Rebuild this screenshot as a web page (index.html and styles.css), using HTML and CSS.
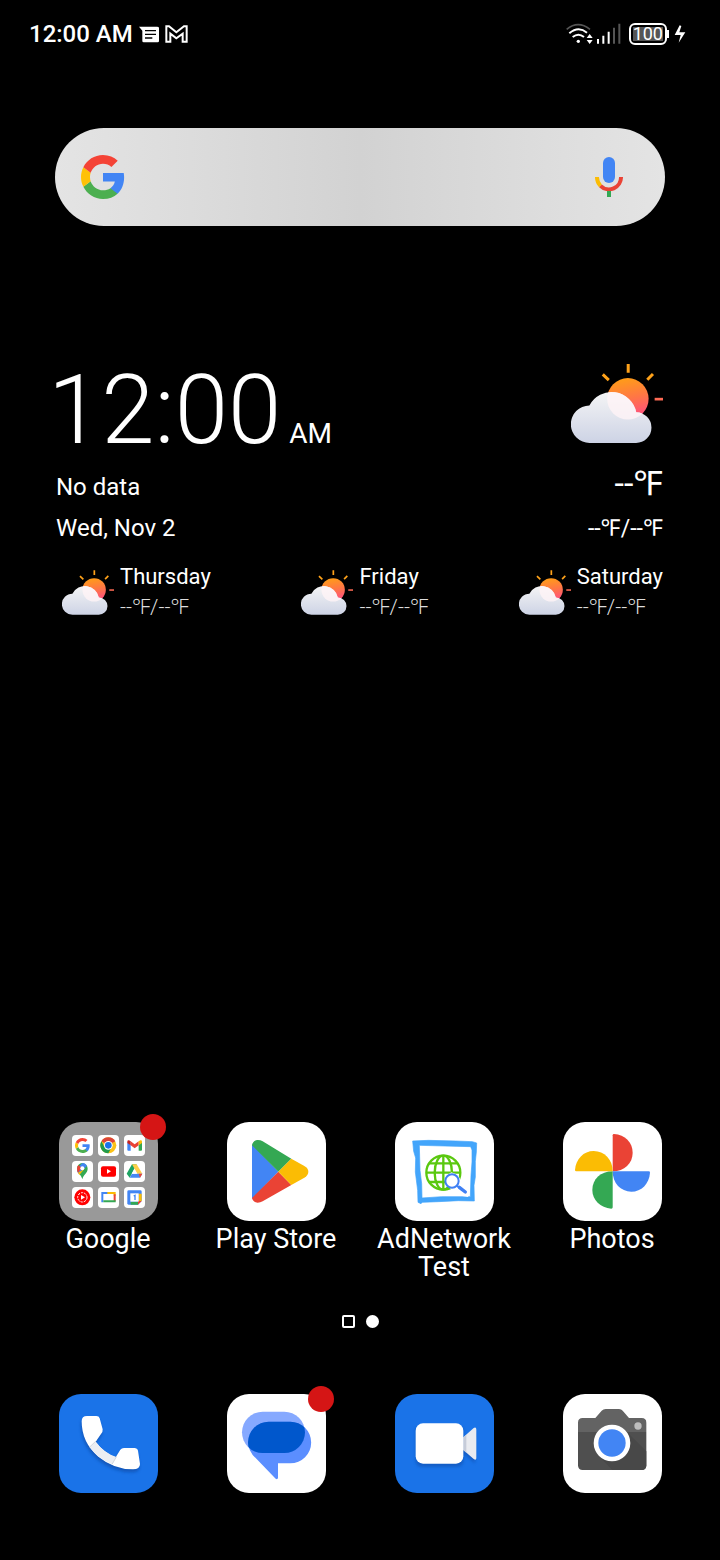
FILE: index.html
```html
<!DOCTYPE html>
<html lang="en">
    <head>
        <meta charset="utf-8">
        <meta name="viewport" content="width=device-width, initial-scale=1">
        <title>Home</title>
        <link rel="stylesheet" href="styles.css">
    </head>
    <body>
        <!-- shared shapes -->
        <svg class="defs" width="0" height="0" aria-hidden="true">
            <defs>
                <linearGradient id="sun" x1="0.4" y1="0" x2="0.6" y2="1">
                    <stop offset="0" stop-color="#ff9d17"/>
                    <stop offset="0.5" stop-color="#ff7547"/>
                    <stop offset="1" stop-color="#ff4b86"/>
                </linearGradient>
                <linearGradient id="cloud" x1="0" y1="0" x2="0" y2="1">
                    <stop offset="0" stop-color="#f4f4f5"/>
                    <stop offset="1" stop-color="#cdd3e5"/>
                </linearGradient>
                <clipPath id="cloud-clip">
                    <path d="M56 236A56 56 0 0 1 55 124A75 75 0 0 1 195 144A46 46 0 0 1 194 236Z"/>
                </clipPath>
                <clipPath id="bubble-clip"><rect x="45" y="53" width="189" height="124" rx="62"/></clipPath>
                <filter id="soft" x="-20%" y="-20%" width="140%" height="150%"><feGaussianBlur stdDeviation="5"/></filter>
            </defs>
            <symbol id="weather" viewBox="0 0 275 236">
                <circle cx="170" cy="104" r="62" fill="url(#sun)"/>
                <path d="M171 0V26M95 31L113 48M245 30L228 47" stroke="#ffa21a" stroke-width="9" fill="none"/>
                <path d="M250 105H275" stroke="#ff6b55" stroke-width="8"/>
                <path d="M56 236A56 56 0 0 1 55 124A75 75 0 0 1 195 144A46 46 0 0 1 194 236Z" fill="url(#cloud)"/>
                <circle cx="170" cy="104" r="62" fill="#fff4f6" opacity="0.8" clip-path="url(#cloud-clip)"/>
            </symbol>
            <symbol id="google-g" viewBox="1 1 22 22">
                <path fill="#4285f4" d="M22.56 12.25c0-.78-.07-1.53-.2-2.25H12v4.26h5.92c-.26 1.37-1.04 2.53-2.21 3.31v2.77h3.57c2.08-1.92 3.28-4.74 3.28-8.09z"/>
                <path fill="#4caf50" d="M12 23c2.97 0 5.46-.98 7.28-2.66l-3.57-2.77c-.98.66-2.23 1.06-3.71 1.06-2.86 0-5.29-1.93-6.16-4.53l-3.66 2.83C3.99 20.53 7.7 23 12 23z"/>
                <path fill="#ffc107" d="M5.84 14.09c-.22-.66-.35-1.36-.35-2.09s.13-1.43.35-2.09L2.18 7.07C1.43 8.55 1 10.22 1 12s.43 3.45 1.18 4.93l3.66-2.84z"/>
                <path fill="#f44336" d="M12 5.38c1.62 0 3.06.56 4.21 1.64l3.15-3.15C17.45 2.09 14.97 1 12 1 7.7 1 3.99 3.47 2.18 7.07l3.66 2.84c.87-2.6 3.3-4.53 6.16-4.53z"/>
            </symbol>
        </svg>

        <header class="status">
            <div class="status-left">
                <span class="status-time">12:00 AM</span>
                <svg width="20" height="17" viewBox="0 0 60 51">
                    <path d="M0 2H54Q60 2 60 6V45Q60 49 56 49H14Q10 49 10 45V14Z" fill="#fff"/>
                    <path d="M18 14H51M18 25H51M18 36H40" stroke="#000" stroke-width="4"/>
                </svg>
                <svg width="23" height="18" viewBox="0 0 69 54">
                    <path d="M4 50V4H12L34 22L57 4H65V50H53V26L34 40L16 26V50Z" fill="none" stroke="#fff" stroke-width="6"/>
                </svg>
            </div>
            <div class="status-right">
                <svg width="27" height="22" viewBox="0 0 81 66" fill="none">
                    <path d="M2 19Q36 -9 72 19" stroke="#555" stroke-width="5"/>
                    <path d="M10 31Q37 8 63 29M20 42Q37 28 54 42" stroke="#fff" stroke-width="6"/>
                    <circle cx="37" cy="55" r="5" fill="#fff"/>
                    <path d="M62 45L71 33L80 45ZM62 51L71 63L80 51Z" fill="#fff"/>
                </svg>
                <svg width="24" height="22" viewBox="0 0 72 66" stroke-width="6">
                    <path d="M3 48V62M19 38V62M35 26V62" stroke="#fff"/>
                    <path d="M51 14V62M67 2V62" stroke="#555"/>
                </svg>
                <span class="battery"><span class="battery-level">100</span></span>
                <svg width="12" height="18" viewBox="0 0 36 54">
                    <path d="M17 1L2 30H20L14 53L34 22H16L22 3Z" fill="#fff"/>
                </svg>
            </div>
        </header>

        <main class="home">
            <form class="search">
                <svg width="44" height="44"><use href="#google-g"/></svg>
                <input class="search-input" type="text" aria-label="Search">
                <button class="search-mic" type="button" aria-label="Voice search">
                    <svg width="28" height="41" viewBox="0 0 28 41" fill="none">
                        <rect x="8" width="12" height="26" rx="6" fill="#4285f4"/>
                        <path d="M2 20A12 12 0 0 0 5.5 28.8" stroke="#fbbc05" stroke-width="4"/>
                        <path d="M5.500 28.8A12 12 0 0 0 26 20" stroke="#ea4335" stroke-width="4"/>
                        <rect x="12" y="34" width="4" height="6" fill="#34a853"/>
                    </svg>
                </button>
            </form>

            <section class="widget">
                <div class="row">
                    <div><span class="clock">12:00</span><span class="ampm">AM</span></div>
                    <svg width="92" height="79"><use href="#weather"/></svg>
                </div>
                <div class="row now">
                    <span>No data</span>
                    <span class="temp">--℉</span>
                </div>
                <div class="row date">
                    <span>Wed, Nov 2</span>
                    <span class="range">--℉/--℉</span>
                </div>
                <ul class="days">
                    <li class="day">
                        <svg width="52" height="45"><use href="#weather"/></svg>
                        <div>Thursday<span class="day-range">--℉/--℉</span></div>
                    </li>
                    <li class="day">
                        <svg width="52" height="45"><use href="#weather"/></svg>
                        <div>Friday<span class="day-range">--℉/--℉</span></div>
                    </li>
                    <li class="day">
                        <svg width="52" height="45"><use href="#weather"/></svg>
                        <div>Saturday<span class="day-range">--℉/--℉</span></div>
                    </li>
                </ul>
            </section>

            <nav class="apps">
                <a class="app" href="#">
                    <span class="icon folder">
                        <svg class="mini" viewBox="0 0 63 63"><use href="#google-g" x="9" y="9" width="45" height="45"/></svg>
                        <!-- chrome -->
                        <svg class="mini" viewBox="0 0 63 63">
                            <circle cx="31" cy="31" r="24" fill="#fbc116"/>
                            <path d="M31 31L10 19A24 24 0 0 1 52 19Z" fill="#db4437"/>
                            <path d="M10 19A24 24 0 0 0 31 55L41 37L31 31L20 37Z" fill="#229b4c"/>
                            <circle cx="31" cy="31" r="13" fill="#fff"/>
                            <circle cx="31" cy="31" r="10" fill="#1a73e8"/>
                        </svg>
                        <!-- gmail -->
                        <svg class="mini" viewBox="0 0 63 63">
                            <path d="M10 22L20 29V47H13Q10 47 10 44Z" fill="#4285f4"/>
                            <path d="M54 22L44 29V47H51Q54 47 54 44Z" fill="#34a853"/>
                            <path d="M20 19L32 28L44 19V31L32 40L20 31Z" fill="#ea4335"/>
                            <path d="M10 20Q10 15 15 16L20 19V31L10 24Z" fill="#c5221f"/>
                            <path d="M54 20Q54 15 49 16L44 19V31L54 24Z" fill="#fbbc04"/>
                        </svg>
                        <!-- maps -->
                        <svg class="mini" viewBox="0 0 63 63">
                            <path d="M15 23A16 17 0 0 1 47 23C47 37 34 40 31 55C28 40 15 37 15 23Z" fill="#34a853"/>
                            <path d="M31 6A16 17 0 0 1 45 15L19 38Q15 31 15 23Z" fill="#4285f4"/>
                            <path d="M19 12L29 20L18 36Q15 30 15 23Q15 17 19 12Z" fill="#ea4335"/>
                            <path d="M18 35L37 24L22 42Z" fill="#fbbc04"/>
                            <circle cx="31" cy="22" r="6" fill="#fff"/>
                        </svg>
                        <!-- youtube -->
                        <svg class="mini" viewBox="0 0 63 63">
                            <rect x="9" y="16" width="45" height="31" rx="6" fill="#f00"/>
                            <path d="M27 24V38L39 31Z" fill="#fff"/>
                        </svg>
                        <!-- drive -->
                        <svg class="mini" viewBox="0 0 63 63">
                            <path d="M24 10H38L17 50L8 38Z" fill="#1da462"/>
                            <path d="M24 10H38L55 38H40Z" fill="#ffcf48"/>
                            <path d="M24 38H55L48 50H17Z" fill="#4688f4"/>
                            <path d="M44 38H55L48 50Z" fill="#ea4335"/>
                            <path d="M31 24L39 38H23Z" fill="#fff"/>
                        </svg>
                        <!-- youtube music -->
                        <svg class="mini" viewBox="0 0 63 63">
                            <circle cx="31" cy="31" r="24" fill="#f00"/>
                            <circle cx="31" cy="31" r="14" fill="none" stroke="#fff" stroke-width="3" stroke-dasharray="7 3"/>
                            <path d="M27 24V38L39 31Z" fill="#fff"/>
                        </svg>
                        <!-- tv -->
                        <svg class="mini" viewBox="0 0 63 63" fill="none" stroke-width="6">
                            <path d="M13 46V18H31" stroke="#4285f4"/>
                            <path d="M28 18H50V26" stroke="#fbbc04"/>
                            <path d="M50 22V43" stroke="#ea4335"/>
                            <path d="M16 43H53" stroke="#34a853"/>
                        </svg>
                        <!-- calendar -->
                        <svg class="mini" viewBox="0 0 63 63">
                            <path d="M10 14Q10 10 14 10H49Q53 10 53 14V42L42 53H14Q10 53 10 49Z" fill="#4285f4"/>
                            <path d="M44 20H53V42H44Z" fill="#fbbc04"/>
                            <path d="M20 44H42V53H20Z" fill="#34a853"/>
                            <path d="M42 42H53L42 53Z" fill="#ea4335"/>
                            <rect x="19" y="19" width="25" height="25" fill="#fff"/>
                            <path d="M29 27L33 25V39" fill="none" stroke="#4285f4" stroke-width="4"/>
                        </svg>
                        <span class="badge"></span>
                    </span>
                    <span class="label">Google</span>
                </a>
                <a class="app" href="#">
                    <svg class="icon" viewBox="0 0 297 297">
                        <path d="M75 66L154 149L75 231Z" fill="#4285f4"/>
                        <path d="M75 70Q77 57 90 54Q99 53 107 58L193 110L154 149Z" fill="#34a853"/>
                        <path d="M75 228Q78 241 92 242Q100 242 107 238L193 189L154 149Z" fill="#ea4335"/>
                        <path d="M193 110L232 132Q244 139 244 149Q244 159 232 167L193 189L154 149Z" fill="#fbbc04"/>
                    </svg>
                    <span class="label">Play Store</span>
                </a>
                <a class="app" href="#">
                    <svg class="icon" viewBox="0 0 297 297" fill="none">
                        <path d="M53 57L100 55L182 57L232 59L245 63L244 90L241 118L241 165L237 190L238 237L190 236L130 239L82 241L78 245L69 241L68 205L61 150L62 108L56 88ZM73 70L75 145L80 185L81 228L140 224L226 224L228 160L231 120L231 84L227 74L150 72Z" fill="#43a5fb" fill-rule="evenodd" stroke="#43a5fb" stroke-width="2"/>
                        <g stroke="#5ac80f" stroke-width="7">
                            <circle cx="145" cy="152" r="51"/>
                            <ellipse cx="145" cy="152" rx="26" ry="51"/>
                            <path d="M145 101V203M102 124H188M94 152H196M102 180H188"/>
                        </g>
                        <path d="M168 202L150 182L153 162L169 151L188 158L197 174L210 186L220 225L160 215Z" fill="#fff"/>
                        <circle cx="171" cy="177" r="20" fill="#fff" stroke="#4080f4" stroke-width="6"/>
                        <path d="M186 191L194 198" stroke="#4080f4" stroke-width="6"/>
                        <path d="M193 196L211 210" stroke="#4080f4" stroke-width="10" stroke-linecap="round"/>
                    </svg>
                    <span class="label">AdNetwork Test</span>
                </a>
                <a class="app" href="#">
                    <svg class="icon" viewBox="0 0 297 297">
                        <path d="M149 40Q149 36 153 36C186 38 209 62 209 92C209 124 184 148 149 148Z" fill="#ea4335"/>
                        <path d="M257 148Q261 148 261 152C259 185 235 209 205 209C173 209 149 184 149 148Z" fill="#4285f4"/>
                        <path d="M149 256Q149 260 145 260C112 258 88 234 88 204C88 172 113 148 149 148Z" fill="#34a853"/>
                        <path d="M40 148Q36 148 36 144C38 111 62 87 92 87C124 87 149 112 149 148Z" fill="#fbbc04"/>
                    </svg>
                    <span class="label">Photos</span>
                </a>
            </nav>

            <div class="pages">
                <span class="page"></span>
                <span class="page current"></span>
            </div>

            <nav class="apps">
                <a class="app" href="#" aria-label="Phone">
                    <svg class="icon blue" viewBox="0 0 297 297">
                        <path d="M68 82Q68 66 84 66H112Q120 66 122 73L131 106Q132 114 126 120L110 143Q134 176 170 190L184 167Q188 162 195 162H226Q235 162 237 170L243 210Q243 226 222 226Q165 226 118 188Q68 146 68 82Z" fill="#0d47a1" opacity="0.6" transform="translate(-2 9)" filter="url(#soft)"/>
                        <path d="M68 82Q68 66 84 66H112Q120 66 122 73L131 106Q132 114 126 120L110 143Q134 176 170 190L184 167Q188 162 195 162H226Q235 162 237 170L243 210Q243 226 222 226Q165 226 118 188Q68 146 68 82Z" fill="#fff"/>
                        <path d="M110 143Q134 176 172 189L159 211Q118 194 92 159Z" fill="#eceef2"/>
                        <path d="M112 140L92 159M173 187L159 211" stroke="#d3d7de" stroke-width="3"/>
                    </svg>
                </a>
                <a class="app" href="#" aria-label="Messages">
                    <span class="icon">
                        <svg width="99" height="99" viewBox="0 0 297 297">
                            <rect x="45" y="53" width="189" height="124" rx="62" fill="#86a9ff"/>
                            <path d="M125 83H190A62 62 0 0 1 190 208H153V251Q152 258 146 254L77 183A62 62 0 0 1 125 83Z" fill="#5b8eff"/>
                            <rect x="63" y="83" width="189" height="125" rx="62" fill="#0057cc" clip-path="url(#bubble-clip)"/>
                        </svg>
                        <span class="badge"></span>
                    </span>
                </a>
                <a class="app" href="#" aria-label="Video call">
                    <svg class="icon blue" viewBox="0 0 297 297">
                        <path d="M62 102H205V199Q205 218 185 218H82Q62 218 62 199ZM205 140L240 112V208L205 178Z" fill="#0d47a1" opacity="0.5" filter="url(#soft)"/>
                        <path d="M205 130L236 102Q244 98 244 107V191Q244 201 236 195L205 168Z" fill="#e9ebf0"/>
                        <path d="M205 130L214 122V176L205 168Z" fill="#c6ccd9"/>
                        <rect x="62" y="88" width="143" height="121" rx="22" fill="#fff"/>
                    </svg>
                </a>
                <a class="app" href="#" aria-label="Camera">
                    <svg class="icon" viewBox="0 0 297 297">
                        <path d="M45 114V86Q45 72 59 72H97L116 50Q121 45 128 45H168Q175 45 179 50L198 72H236Q250 72 250 86V114Z" fill="#636363"/>
                        <path d="M45 114H250V214Q250 228 236 228H59Q45 228 45 214Z" fill="#4f4f4f"/>
                        <path d="M186 108L250 172V214Q250 228 236 228H148L108 186Z" fill="#484848"/>
                        <circle cx="147" cy="147" r="55" fill="#fff"/>
                        <circle cx="147" cy="147" r="41" fill="#4285f4"/>
                        <circle cx="225" cy="96" r="11" fill="#bdbdbd"/>
                    </svg>
                </a>
            </nav>
        </main>
    </body>
</html>
```

FILE: styles.css
```css
body {
    margin: 0;
    min-height: 100vh;
    display: flex;
    flex-direction: column;
    background: #000;
    color: #fff;
    font-family: Roboto, "Noto Sans", "Noto Sans CJK SC", sans-serif;
    font-size: 24px;
}
svg {
    display: block;
}
.defs {
    position: absolute;
}

/* status bar */
.status {
    display: flex;
    justify-content: space-between;
    padding: 17px 34px 0 29px;
    line-height: 34px;
}
.status-left, .status-right {
    display: flex;
    align-items: center;
    gap: 6px;
}
.status-right {
    gap: 4px;
}
.status-time {
    font-weight: 500;
}
.battery {
    position: relative;
    border: 2px solid #fff;
    border-radius: 6px;
    padding: 2px;
    margin: 0 3px 0 4px;
}
.battery:after {
    content: "";
    position: absolute;
    right: -4px;
    top: 5px;
    width: 2px;
    height: 8px;
    background: #fff;
}
.battery-level {
    display: block;
    background: #555;
    font-size: 18px;
    line-height: 14px;
}

.home {
    flex: 1;
    display: flex;
    flex-direction: column;
    padding: 77px 0 67px;
}

/* search bar */
.search {
    display: flex;
    align-items: center;
    height: 98px;
    margin: 0 55px;
    padding: 0 42px 0 26px;
    box-sizing: border-box;
    border-radius: 49px;
    background: linear-gradient(90deg, #e4e4e4, #d2d2d2 50%, #e4e4e4);
}
.search-input {
    flex: 1;
    min-width: 0;
    height: 60px;
    border: 0;
    outline: none;
    background: none;
    font: inherit;
}
.search-mic {
    border: 0;
    padding: 0;
    background: none;
}

/* clock and weather */
.widget {
    margin: 136px 57px 40px 56px;
}
.row {
    display: flex;
    justify-content: space-between;
    align-items: baseline;
}
/* pull the big digits back to the text edge */
.clock {
    margin-left: -8px;
    font-size: 96px;
    line-height: 96px;
    font-weight: 300;
}
.ampm {
    font-size: 28px;
    margin-left: 8px;
}
.now {
    margin-top: 5px;
    line-height: 40px;
}
.temp {
    font-size: 34px;
}
.date {
    line-height: 42px;
}
.range {
    font-size: 23px;
}
.days {
    display: flex;
    justify-content: space-between;
    list-style: none;
    margin: 12px 0 0;
    padding: 0 0 0 6px;
    font-size: 22px;
    line-height: 30px;
}
.day {
    display: flex;
    align-items: center;
    gap: 6px;
}
.day-range {
    display: block;
    font-size: 21px;
    font-weight: 300;
    color: #ddd;
}

/* app icons */
.apps {
    display: grid;
    grid-template-columns: repeat(4, 1fr);
    padding: 0 24px;
}
.widget + .apps {
    margin-top: auto;
}
.app {
    display: flex;
    flex-direction: column;
    align-items: center;
    gap: 4px;
    color: #fff;
    text-decoration: none;
}
.icon {
    position: relative;
    width: 99px;
    height: 99px;
    border-radius: 22px;
    background: #fff;
}
.blue {
    background: #1a73e8;
}
.folder {
    display: grid;
    grid-template-columns: repeat(3, 21px);
    gap: 5px;
    padding: 13px;
    box-sizing: border-box;
    background: #999;
}
.mini {
    width: 21px;
    height: 21px;
    border-radius: 4px;
    background: #fff;
}
.badge {
    position: absolute;
    top: -8px;
    right: -8px;
    width: 26px;
    height: 26px;
    border-radius: 50%;
    background: #d51515;
}
.label {
    font-size: 27px;
    line-height: 28px;
    text-align: center;
}

.pages {
    display: flex;
    justify-content: center;
    gap: 11px;
    margin: 34px 0 66px;
}
.page {
    width: 13px;
    height: 13px;
    box-sizing: border-box;
    border: 2px solid #fff;
    border-radius: 2px;
}
.current {
    background: #fff;
    border-radius: 50%;
}
```
